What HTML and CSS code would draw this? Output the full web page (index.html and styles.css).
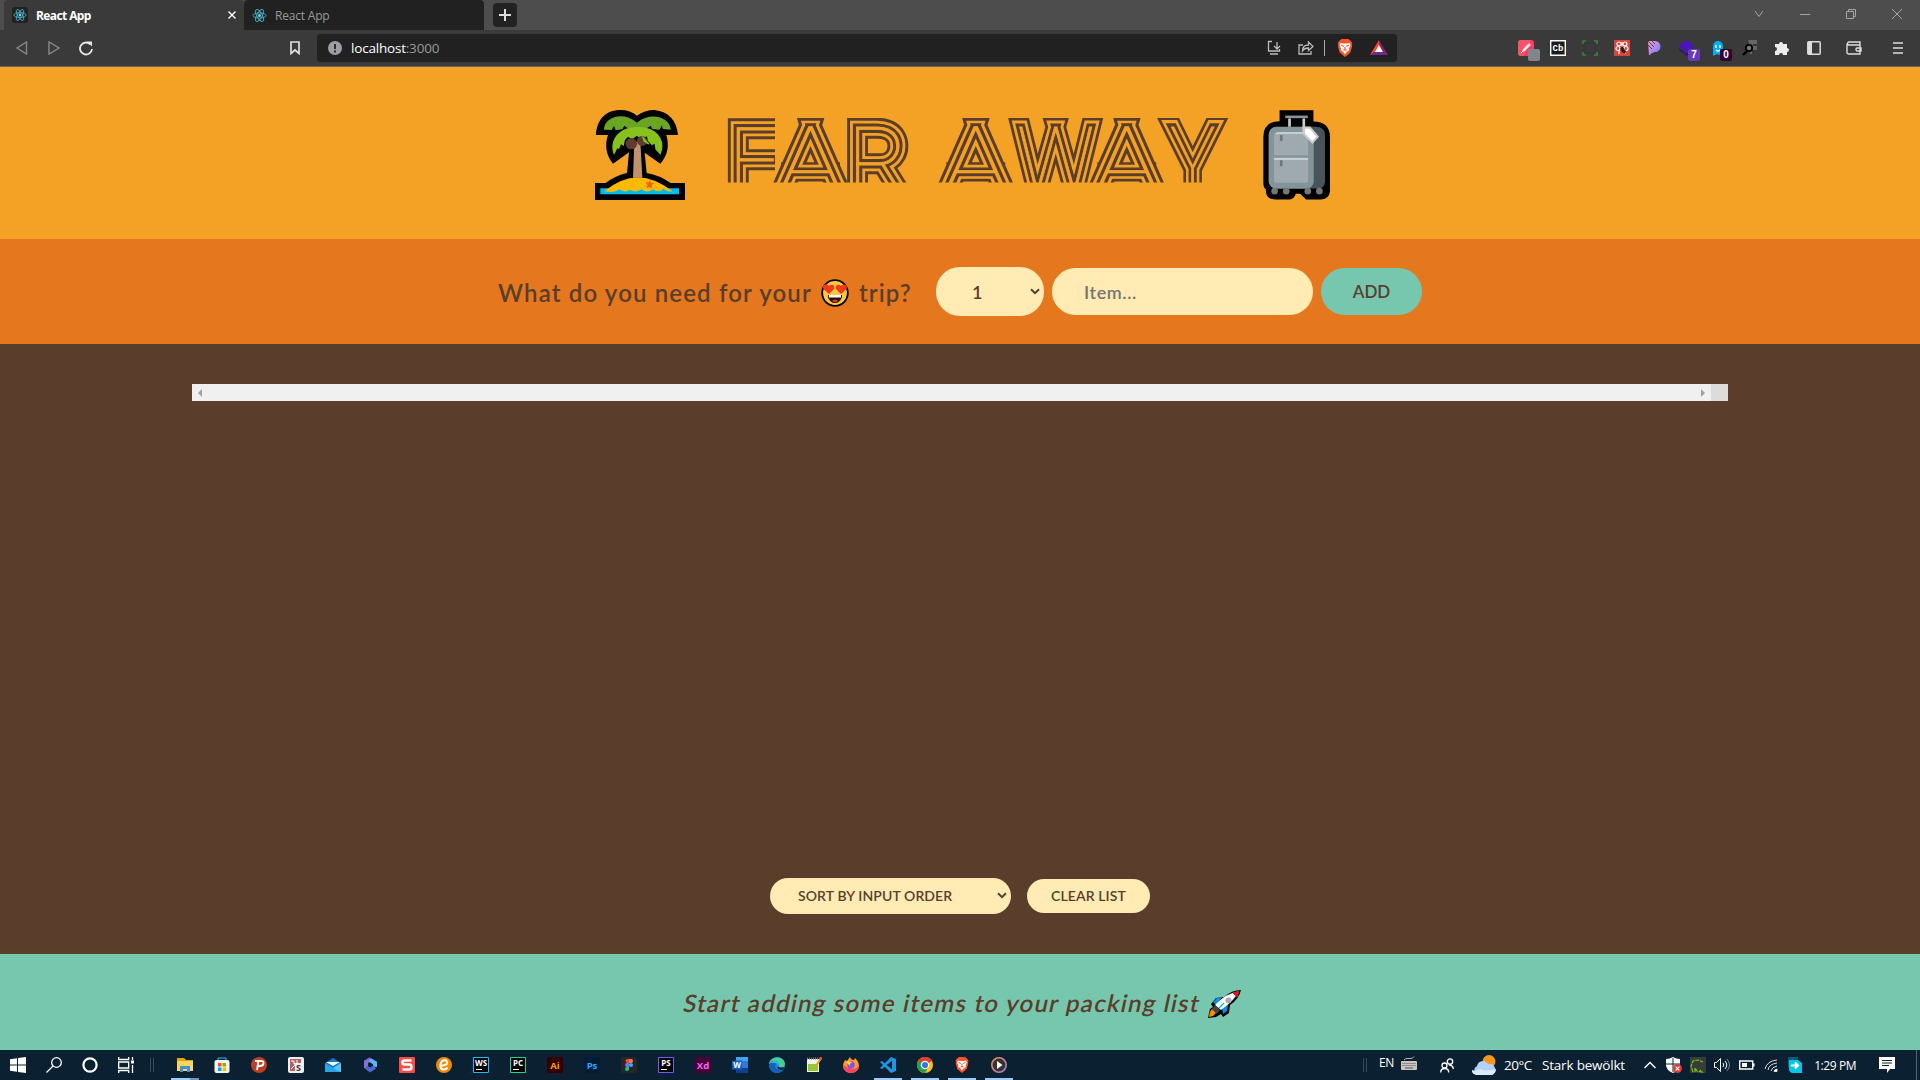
FILE: index.html
```html
<!DOCTYPE html>
<html lang="en">
<head>
<meta charset="utf-8">
<title>React App</title>
<link rel="stylesheet" href="styles.css">
</head>
<body>
<svg class="defs" width="0" height="0">
  <symbol id="react" viewBox="0 0 16 16"><g fill="none" stroke="#4aa9c0" stroke-width="1"><ellipse cx="8" cy="8" rx="7" ry="2.8"/><ellipse cx="8" cy="8" rx="7" ry="2.8" transform="rotate(60 8 8)"/><ellipse cx="8" cy="8" rx="7" ry="2.8" transform="rotate(120 8 8)"/></g><circle cx="8" cy="8" r="1.6" fill="#61dafb"/></symbol>
  <symbol id="brave" viewBox="0 0 16 16"><path d="M5 0h6l2 1.500 1.500 2-.5 2 .3 1-1.500 5.500L8 16l-4.800-4L1.700 6.500l.3-1-.5-2 1.500-2z" fill="#fb542b"/><path d="M4 3.500l2.500.5h3l2.500-.5 1 2.200-1.500 2.600.4 1.700-2 1L8 13.500 6.100 11l-2-1 .4-1.700L3 5.700z" fill="#fff"/><path d="M4.500 5.500l2.500 1M11.500 5.500L9 6.500M8 7v2.500M6.500 10L8 9.500l1.500.5" stroke="#fb542b" fill="none"/></symbol>
  <symbol id="chev" viewBox="0 0 10 7"><path d="M1 1.200l4 4 4-4" fill="none" stroke="#5a3e2b" stroke-width="2"/></symbol>
</svg>

<div class="tabs">
  <div class="tab active"><span class="fav"><svg width="14" height="14"><use href="#react"/></svg></span><b class="tab-title">React App</b><svg class="close" width="8" height="8" viewBox="0 0 8 8"><path d="M.5.500l7 7M7.500.500l-7 7" stroke="#fff" stroke-width="1.400"/></svg></div>
  <div class="tab"><svg width="15" height="15"><use href="#react"/></svg><span class="tab-title">React App</span></div>
  <div class="newtab"><svg width="12" height="12" viewBox="0 0 12 12"><path d="M6 0v12M0 6h12" stroke="#ddd" stroke-width="2"/></svg></div>
  <div class="window-buttons">
    <i><svg width="10" height="10" viewBox="0 0 10 10"><path d="M1 2l4 5.500L9 2"/></svg></i>
    <i><svg width="10" height="10" viewBox="0 0 10 10"><path d="M0 5.500h10"/></svg></i>
    <i><svg width="10" height="10" viewBox="0 0 10 10"><path d="M.5 2.500h7v7h-7zM2.500 2V.5h7v7H8"/></svg></i>
    <i><svg width="10" height="10" viewBox="0 0 10 10"><path d="M0 0l10 10M10 0L0 10"/></svg></i>
  </div>
</div>

<div class="toolbar">
  <div class="nav">
    <svg width="32" height="16" viewBox="0 0 32 16"><path d="M20.500 2v12L11 8z" fill="none" stroke="#888" stroke-width="1.400"/></svg>
    <svg width="32" height="16" viewBox="0 0 32 16"><path d="M11 2v12l10-6z" fill="none" stroke="#888" stroke-width="1.400"/></svg>
    <svg width="32" height="16" viewBox="0 0 32 16"><path d="M20.500 4.500A6 6 0 1 0 22 9" fill="none" stroke="#e8e8e8" stroke-width="1.800"/><path d="M17 1.500h5v5z" fill="#e8e8e8"/></svg>
  </div>
  <svg class="bookmark" width="10" height="14" viewBox="0 0 10 14"><path d="M1 1h8v11.500L5 9l-4 3.500z" fill="none" stroke="#ddd" stroke-width="1.700"/></svg>
  <div class="address">
    <svg width="14" height="14" viewBox="0 0 14 14"><circle cx="7" cy="7" r="7" fill="#9aa0a6"/><path d="M7 3v5M7 9.500v2" stroke="#222" stroke-width="1.800"/></svg>
    <span class="url">localhost<span>:3000</span></span>
    <div class="address-icons">
      <svg width="16" height="16" viewBox="0 0 16 16" class="line"><path d="M6 1.500H2.500v9.500h11V9M4 14h8M11 2v7M8 6l3 3 3-3"/></svg>
      <svg width="16" height="16" viewBox="0 0 16 16" class="line"><path d="M5 5H1v9h12v-3M4.500 11c0-4 2-6 6-6V2l4.500 4.500-4.500 4V8C8 8 6 8.500 4.500 11z"/></svg>
      <span class="rule"></span>
      <svg class="lion" width="18" height="18"><use href="#brave"/></svg>
      <svg width="18" height="16" viewBox="0 0 18 16"><path d="M9 0L0 15l9-4z" fill="#ff4724"/><path d="M9 0l9 15-9-4z" fill="#8a1f6e"/><path d="M0 15h18l-4-3H4z" fill="#662d91"/><path d="M9 5l4 7H5z" fill="#fff"/></svg>
    </div>
  </div>
  <div class="extensions">
    <i><svg width="16" height="16" viewBox="0 0 16 16"><rect width="16" height="16" rx="3" fill="#f63d68"/><path d="M0 3q0-3 3-3h10L5 16H3q-3 0-3-3z" fill="#f8526a"/><path d="M4 12l1-3 6-6 2 2-6 6z" fill="#ffd5cb"/><path d="M3 13l9-9" stroke="#fff" stroke-width="1"/></svg><em class="badge grey"></em></i>
    <i><svg width="16" height="16" viewBox="0 0 16 16"><path d="M.7.700h14.600v14.600H.7z" fill="#1b1b1b" stroke="#fff" stroke-width="1.400"/><text x="8" y="11" class="t-cb">Cb</text></svg></i>
    <i><svg width="16" height="16" viewBox="0 0 16 16"><path d="M3 3h10v10H3z" fill="none" stroke="#333"/><path d="M1 4V1h3M12 1h3v3M15 12v3h-3M4 15H1v-3" fill="none" stroke="#39843a" stroke-width="1.600"/></svg></i>
    <i><svg width="16" height="16" viewBox="0 0 16 16"><rect width="16" height="16" fill="#d9443c"/><g fill="none" stroke="#fff" stroke-width="1.200"><circle cx="5" cy="4" r="2"/><circle cx="11" cy="4" r="2"/><circle cx="4" cy="8.500" r="2"/><circle cx="12" cy="8.500" r="2"/><path d="M5 10v4M11 10v4M8 2v5"/></g><path d="M8 6l4 5-1 3-3-2-2-3z" fill="#321"/></svg></i>
    <i><svg width="14" height="16" viewBox="0 0 14 16"><defs><linearGradient id="pg" x2="1" y2="1"><stop stop-color="#ff9bd5"/><stop offset="1" stop-color="#5e7cff"/></linearGradient></defs><path d="M1 1h7a5.500 5.500 0 0 1 0 11q-3 0-6 3.500z" fill="url(#pg)"/><path d="M1 1l6 6M4 0l4 4M1 5l4 4" stroke="#3a3a3a" stroke-width=".9"/></svg></i>
    <i><svg width="17" height="17" viewBox="0 0 17 17"><path d="M8 0l8 6-7 6-8-6z" fill="#5010c4"/><path d="M1 9l8 6 7-6" fill="none" stroke="#37108a" stroke-width="2"/></svg><em class="badge purple">7</em></i>
    <i><svg width="14" height="16" viewBox="0 0 14 16"><path d="M2 16V6a5 5 0 0 1 10 0v8l-2-1-2 2-2-1z" fill="#00aef0"/><path d="M5 5v3M9 5v3M5 10q2 2 4 0" stroke="#fff" fill="none" stroke-width="1.300"/></svg><em class="badge plum">0</em></i>
    <i><svg width="16" height="16" viewBox="0 0 16 16"><path d="M6 0h9v4h-4v2h4v4h-5v4H8V6z" fill="#666"/><circle cx="7" cy="8" r="3.200" fill="#777" stroke="#000" stroke-width="1.800"/><path d="M5 11l-4 4" stroke="#000" stroke-width="2.200"/></svg></i>
    <i><svg width="16" height="16" viewBox="0 0 16 16"><path d="M1 4h4a2 2 0 1 1 4 0h4v4a2 2 0 1 1 0 4v3H9a2 2 0 1 0-4 0H1v-4a2 2 0 1 0 0-4z" fill="#eee"/></svg></i>
    <i><svg width="14" height="14" viewBox="0 0 14 14"><rect x=".8" y=".8" width="12.400" height="12.400" rx="1" fill="none" stroke="#ddd" stroke-width="1.500"/><path d="M1 1h4v12H1z" fill="#ddd"/></svg></i>
    <i class="wide"><svg width="16" height="14" viewBox="0 0 16 14"><path d="M14 3.500V1H2.500a1.700 1.700 0 0 0 0 3H14v9H3c-1.500 0-2-.5-2-2V2.500M15 7h-4a1.600 1.600 0 0 0 0 3h4z" fill="none" stroke="#ddd" stroke-width="1.400"/></svg></i>
    <i class="menu"><svg width="10" height="14" viewBox="0 0 10 14"><path d="M0 2h10M0 7h10M0 12h10" stroke="#ddd" stroke-width="1.500"/></svg></i>
  </div>
</div>

<main class="app">
  <header class="logo">
    <svg width="90" height="90" viewBox="45 60 270 270">
      <path d="M45 279h32q29-22 64-30l6-62-48 34c-22-26-25-58-15-86H48c2-44 26-75 75-75q28 0 48 17 22-17 52-17c44 4 67 33 71 75h-35c9 31 5 61-18 86l-47-33 6 61q40 7 72 30H315v51H45z"/>
      <path d="M72 119c0-38 57-57 99-21 43-36 101-14 101 21l-23-2-4-11-6 13-22-2-5-10-12 8H143l-10-8-6 11-20 3-5-13-7 12z" fill="#6aa524"/>
      <path d="M102 195c-17-44 14-84 69-84 59-4 91 42 70 83l-15-16-2-17-8 5-13-14-2-13-14 7-17-8-14 10-12-8-9 10-4 18-8-5-6 15-5-3z" fill="#86c11d"/>
      <path d="M163 155h18l6 108h-28z" fill="#bf946c"/><circle cx="154" cy="161" r="17" fill="#5f3b32"/><circle cx="186" cy="153" r="15" fill="#5f3b32"/><path d="M184 135l26 28-7 0-12-9z" fill="#86c11d"/>
      <path d="M61 295h236v18H61z" fill="#00bcf2"/><path d="M73 304q99-83 205 0-17 3-27-8-16 15-32 2-17 13-34 0-18 12-34 1-16 11-33-1-15 12-45 6z" fill="#ffb900"/><path d="M210 269l3 9 10 1-8 7 3 9-9-4-9 4 2-10-6-7 10-1z" fill="#f7630c"/>
    </svg>
    <h1 class="title"><svg width="495" height="116" viewBox="0 -15 495 116">
      <clipPath id="arms"><path d="M0 -15h48v116H0z"/></clipPath>
      <g class="line-a"><g id="name" class="mark"><text clip-path="url(#arms)" x="1" y="75">F</text><text transform="translate(50.700 75) scale(1.180 1)">A</text><text x="120.500" y="75">R </text><text transform="translate(216 75) scale(1.180 1)">A</text><text transform="translate(290 75) scale(.92 1)">W</text><text transform="translate(367 75) scale(1.180 1)">A</text><text transform="translate(443 75) scale(.82 1)">Y</text></g></g>
      <use href="#name" class="line-b"/><use href="#name" class="line-c"/><use href="#name" class="line-d"/>
      <path d="M-8 -15h511V0H-8zM-8 64.500h511v37H-8z" fill="#f4a226"/>
    </svg></h1>
    <svg width="67" height="90" viewBox="1028 60 202 270">
      <path d="M1078 60h102v34q49 0 50 46v150q4 40-30 39h-42l-18-17h-13q-5 16-18 17h-44c-20 0-30-12-28-30-7-4-8-12-8-26V141q1-48 49-48z"/>
      <path d="M1159 110h31q25 2 25 26v140q-2 20-20 20h-36z" fill="#4a5359"/><rect x="1045" y="110" width="136" height="187" rx="23" fill="#83949a"/><rect x="1061" y="128" width="103" height="151" rx="10" fill="#9faab0"/>
      <path d="M1095 80h68" stroke="#83949a" stroke-width="8"/><path d="M1108 85v25M1151 85v32" stroke="#c9cdd0" stroke-width="8"/><path d="M1067 132q3-3 10-3h87M1061 207h103" stroke="#c5ced1" stroke-width="6"/><path d="M1061 199h103" stroke="#83949a" stroke-width="7"/><path d="M1083 135v18M1083 211v18" stroke="#69797e" stroke-width="8"/>
      <path d="M1147 109h24l26 31-20 22-30-30z" fill="#ccc"/><path d="M1155 116h14l20 24-13 13-21-23z" fill="#fff"/>
      <g fill="#767676"><circle cx="1063" cy="304" r="10"/><circle cx="1098" cy="304" r="10"/><circle cx="1163" cy="304" r="10"/><circle cx="1198" cy="304" r="10"/></g>
    </svg>
  </header>

  <form class="add-form">
    <h3 class="question"><span class="q1">What do you need for your</span>
      <svg width="28" height="28" viewBox="0 0 28 28"><circle cx="14" cy="14" r="12.800" fill="#ffc83d" stroke="#000" stroke-width="1.800"/><path d="M8 15L2.500 10C.5 6 5.500 4 8 7c2.500-3 6.500-.5 5 3zM20 15l-5-5c-1.500-3.500 2.500-6 5-3 2.500-3 7.500-1 5.500 3z" fill="#f03a17"/><path d="M7 16h14v2q-2 6-7 6t-7-6z" fill="#2b1010"/><path d="M8 16h12v2.500H8z" fill="#fff"/><path d="M11 22q3-3 6 0-3 2-6 0" fill="#f03a17"/></svg>
      <span class="q2">trip?</span></h3>
    <div class="pill qty"><span>1</span><svg width="10" height="7"><use href="#chev"/></svg></div>
    <input class="pill item" type="text" placeholder="Item...">
    <button class="pill add" type="button">ADD</button>
  </form>

  <section class="list">
    <div class="scroller"><svg width="4" height="8" viewBox="0 0 4 8"><path d="M4 0v8L0 4z"/></svg><svg class="right" width="4" height="8" viewBox="0 0 4 8"><path d="M0 0v8l4-4z"/></svg><span class="corner"></span></div>
    <div class="actions">
      <div class="pill sort"><span>SORT BY INPUT ORDER</span><svg width="10" height="7"><use href="#chev"/></svg></div>
      <button class="pill clear" type="button">CLEAR LIST</button>
    </div>
  </section>

  <footer class="stats"><span class="hint">Start adding some items to your packing list</span>
    <svg width="35" height="28" viewBox="0 0 35 28"><path d="M34 0q-2 9-11 15l-1 8-6 4-2-3-5 3-8 1 2-9 3-2-2-3 5-6 8-1Q25 0 34 0z"/><path d="M6 12l4-4 5-1-6 8zM16 24l-1-6 6-4-1 7z" fill="#0093e8"/><path d="M31.500 1.500Q29 9 14 20l-6-5Q19 3 31.500 1.500z" fill="#fff"/><path d="M26 3l6-2-2 6z" fill="#e81123" stroke="#e81123"/><circle cx="21.500" cy="10.500" r="3" fill="#aab"/><path d="M12 18l5-5" stroke="#00bcf2" stroke-width="1.200"/><path d="M8 15l5 5-3 4-5-5z" fill="#444"/><path d="M5 19l4 4-3 3-4 1 1-5z" fill="#ff8c00"/></svg>
  </footer>
</main>

<div class="taskbar">
  <div class="system">
    <i><svg width="16" height="16" viewBox="0 0 16 16" fill="#fff"><path d="M0 2.200l7-1v6.300H0zM8 1l8-1v7.500H8zM0 8.500h7v6.300l-7-1zM8 8.500h8V16l-8-1z"/></svg></i>
    <i><svg width="16" height="16" viewBox="0 0 16 16" class="white"><circle cx="10.500" cy="5.500" r="4.800"/><path d="M7 9L.5 15.500"/></svg></i>
    <i><svg width="16" height="16" viewBox="0 0 16 16" class="white ring"><circle cx="8" cy="8" r="6.600"/></svg></i>
    <i><svg width="16" height="16" viewBox="0 0 16 16" class="white"><path d="M.7 0v2.500h10V0M.7 5h10v6h-10zM.7 16v-2.500h10V16M14.500 0v3M14.500 8v8"/><path d="M13 5h3" stroke-width="3"/></svg></i>
    <span class="grip"></span>
  </div>
  <div class="apps">
    <i class="open stacked"><svg width="16" height="16" viewBox="0 0 16 16"><path d="M0 1h7l2 2h7v11H0z" fill="#e8a500"/><path d="M0 4h16v10H0z" fill="#ffd35c"/><path d="M3 15V9h10v6h-3v-3H6v3z" fill="#3f8fe0"/></svg></i>
    <i><svg width="16" height="16" viewBox="0 0 16 16"><path d="M4 4V1h8v3" fill="none" stroke="#3bb7ee"/><rect x=".5" y="3" width="15" height="13" rx="2" fill="#f3f3f3"/><path d="M4 6h3.500v3.500H4z" fill="#f25022"/><path d="M8.500 6H12v3.500H8.500z" fill="#7fba00"/><path d="M4 10.500h3.500V14H4z" fill="#00a4ef"/><path d="M8.500 10.500H12V14H8.500z" fill="#ffb900"/></svg></i>
    <i><svg width="16" height="16" viewBox="0 0 16 16"><circle cx="8" cy="8" r="8" fill="#bd3f23"/><path d="M4 4h6q3 0 2.500 2.500T9 9H7.500M7.500 4L6 13" fill="none" stroke="#fff" stroke-width="1.800"/></svg></i>
    <i><svg width="16" height="16" viewBox="0 0 16 16"><rect width="16" height="16" rx="2" fill="#eee"/><path d="M2 2h11v4H7v8H2z" fill="#b46267"/><path d="M3 4h3v3h3V3M3 12l4-4" fill="none" stroke="#fff"/><text x="10.500" y="14" class="t-s">S</text></svg></i>
    <i><svg width="16" height="16" viewBox="0 0 16 16"><path d="M0 6l8-5 8 5v9H0z" fill="#1277c9"/><path d="M1 5h14L8 9z" fill="#f5f5f5"/><path d="M0 6l8 5 8-5v9H0z" fill="#2aa6e8"/><path d="M8 11l8-5v9z" fill="#58c5f5"/></svg></i>
    <i><svg width="16" height="16" viewBox="0 0 16 16" fill="none" stroke-width="4"><path d="M9 2L4 5v6" stroke="#8c6de0"/><path d="M8 3l5 3v4" stroke="#59b8f4"/><path d="M4 10l4 3 5-3" stroke="#4b67d1"/></svg></i>
    <i><svg width="16" height="16" viewBox="0 0 16 16"><rect width="16" height="16" rx="1" fill="#fb4b46"/><path d="M12.500 3.500h-7q-2 0-2 2t2 2h5q2 0 2 2.500t-2 2.500h-7" fill="none" stroke="#fff" stroke-width="2.600"/></svg></i>
    <i><svg width="16" height="16" viewBox="0 0 16 16"><circle cx="8" cy="8" r="8" fill="#f08a0c"/><path d="M4 9c5 0 8-2 7-4.500S5 3 4.500 8s4 6 7 2.500" fill="none" stroke="#fff" stroke-width="2"/></svg></i>
    <i><svg width="16" height="16" viewBox="0 0 16 16"><path d="M.5.500h15v15H.5z" fill="#000" stroke="#1bbcf5"/><text x="8" y="8.500" class="t-jb">WS</text><path d="M3 12.500h6" stroke="#fff"/></svg></i>
    <i><svg width="16" height="16" viewBox="0 0 16 16"><path d="M.5.500h15v15H.5z" fill="#000" stroke="#21d789"/><text x="8" y="8.500" class="t-jb">PC</text><path d="M3 12.500h6" stroke="#fff"/></svg></i>
    <i><svg width="16" height="16" viewBox="0 0 16 16"><rect width="16" height="16" rx="2" fill="#330000"/><text x="8" y="11.500" class="t-ad" fill="#ff9a00">Ai</text></svg></i>
    <i><svg width="16" height="16" viewBox="0 0 16 16"><rect width="16" height="16" rx="2" fill="#001e36"/><text x="8" y="11.500" class="t-ad" fill="#31a8ff">Ps</text></svg></i>
    <i><svg width="16" height="16" viewBox="0 0 16 16"><rect width="16" height="16" rx="2" fill="#262626"/><path d="M6.500 2H8v4H6.500a2 2 0 0 1 0-4z" fill="#f24e1e"/><path d="M8 2h2a2 2 0 0 1 0 4H8z" fill="#ff7262"/><path d="M8 6H6a2 2 0 0 0 0 4h2z" fill="#a259ff"/><circle cx="10" cy="8" r="2" fill="#1abcfe"/><path d="M8 10H6a2 2 0 1 0 2 2z" fill="#0acf83"/></svg></i>
    <i><svg width="16" height="16" viewBox="0 0 16 16"><path d="M.5.500h15v15H.5z" fill="#000" stroke="#765af8"/><text x="8" y="8.500" class="t-jb">PS</text><path d="M3 12.500h6" stroke="#fff"/></svg></i>
    <i><svg width="16" height="16" viewBox="0 0 16 16"><rect width="16" height="16" rx="2" fill="#470137"/><text x="8" y="11.500" class="t-ad" fill="#ff61f6">Xd</text></svg></i>
    <i><svg width="16" height="16" viewBox="0 0 16 16"><path d="M4 0h12v16H4z" fill="#2b7cd3"/><path d="M4 0h12v4H4z" fill="#41a5ee"/><path d="M4 11h12v5H4z" fill="#103f91"/><path d="M0 3.500h10v9H0z" fill="#185abd"/><text x="5" y="10.800" class="t-w">W</text></svg></i>
    <i><svg width="16" height="16" viewBox="0 0 16 16"><circle cx="8" cy="8" r="8" fill="#1684d8"/><path d="M0 7C1-1 15-2 16 7q0 4-5 3.500-2-.5-1-3C8 3 3 3 0 7z" fill="#45cf96"/><path d="M0 7q5-6 10-.500Q7 5 6 9q0 4 8 4-5 5-10 1.500Q0 12 0 7z" fill="#1560b8"/><path d="M0 7q5-6 10-.500L9 8Q5 4 0 7z" fill="#31b6e6"/><path d="M16 8q0 3-5 2.500L9 9.500q-2 3 5 3.500z" fill="#0b2030"/></svg></i>
    <i><svg width="16" height="16" viewBox="0 0 16 16"><path d="M1 2h12v13H1z" fill="#f3f3e6"/><path d="M2 7h10v7H2z" fill="#8ccb36"/><path d="M1 1.500h12" stroke="#777" stroke-width="2" stroke-dasharray="1 1"/><path d="M15 1L8 12" stroke="#e0a52e" stroke-width="2.200"/><path d="M15.500 0l-1.500 2.500" stroke="#e24848" stroke-width="2.500"/></svg></i>
    <i><svg width="16" height="16" viewBox="0 0 16 16"><path d="M2 3l2 1 3-4q1 3 4 3l1-2q4 4 4 8a8 7 0 0 1-16 0q0-3 2-6z" fill="#ff9825"/><path d="M0 8q1 8 8 8t8-8q-2 4-6 4T0 8z" fill="#ff4164"/><circle cx="8" cy="8" r="3.700" fill="#8750e8"/><path d="M3 5q4-2 6 1-3 0-2 3z" fill="#ffd63f"/></svg></i>
    <i class="open"><svg width="16" height="16" viewBox="0 0 16 16"><path d="M0 5l2-1 10 8V4L2 12l-2-1 11-11 5 2v12l-5 2z" fill="#2196e0"/><path d="M12 4l-5 4 5 4z" fill="#0b2030"/></svg></i>
    <i class="open"><svg width="16" height="16" viewBox="0 0 16 16"><circle cx="8" cy="8" r="8" fill="#fbc116"/><path d="M8 8L1 4a8 8 0 0 1 14 0z" fill="#e33b2e"/><path d="M1 4a8 8 0 0 0 7 12l4-7z" fill="#24a148"/><circle cx="8" cy="8" r="3.700" fill="#3478e5" stroke="#fff" stroke-width="1.200"/></svg></i>
    <i class="open"><svg width="16" height="16"><use href="#brave"/></svg></i>
    <i class="open"><svg width="16" height="16" viewBox="0 0 16 16"><defs><linearGradient id="mg" x2="1" y2="1"><stop stop-color="#f28b50"/><stop offset="1" stop-color="#9b7edc"/></linearGradient></defs><circle cx="8" cy="8" r="7.200" fill="#333" stroke="url(#mg)" stroke-width="1.600"/><path d="M6 4l5.500 4L6 12z" fill="#fff"/></svg></i>
  </div>
  <div class="tray">
    <span class="grip"></span><span class="lang">EN</span>
    <svg class="kbd" width="16" height="15" viewBox="0 0 16 15"><rect y="5" width="16" height="9" rx="1" fill="#c9c5be"/><path d="M1.500 7.500h13M1.500 9.500h13" stroke="#555" stroke-dasharray="1 1"/><path d="M4 12h8" stroke="#555"/><path d="M3 4q1-2 5-1.500t5-2" fill="none" stroke="#bbb"/></svg>
    <svg class="people white" width="14" height="15" viewBox="0 0 14 15"><circle cx="10" cy="3.500" r="2.700"/><circle cx="4.500" cy="7.500" r="2.500"/><path d="M.7 14.500q0-4 4-4t4 4M9 7q4 0 4.300 4"/></svg>
    <svg class="weather" width="24" height="20" viewBox="0 0 24 20"><circle cx="17" cy="6.500" r="6.500" fill="#f8951d"/><path d="M5 20a5 5 0 0 1 0-9 6 6 0 0 1 11-2 5.500 5.500 0 1 1 3 11z" fill="#b3d1fb"/><path d="M4 20q-5-2-4-5 4 2 8-1 6 3 16 0 0 4-4 6z" fill="#dceaff"/></svg>
    <span class="temp">20°C</span><span class="cond">Stark bewölkt</span>
    <svg class="white caret" width="12" height="8" viewBox="0 0 12 8"><path d="M.5 7L6 1.500 11.500 7" stroke-width="1.400"/></svg>
    <svg class="ti" width="16" height="16" viewBox="0 0 16 16"><path d="M0 2q4 0 7-2 3 2 7 2v6q0 5-7 8-7-3-7-8z" fill="#fff"/><path d="M7 1v14M0 7h14" stroke="#0b2030"/><circle cx="11.500" cy="11.500" r="4.500" fill="#e03a36"/><path d="M9.700 9.700l3.600 3.600M13.300 9.700l-3.600 3.600" stroke="#fff" stroke-width="1.200"/></svg>
    <svg class="ti" width="16" height="16" viewBox="0 0 16 16"><path d="M0 0h16v16H0z" fill="#383d3c"/><path d="M3 15L1 9l2-5 5-1 5 2M5 15v-4l2 3 5 1-2-2" fill="none" stroke="#76c905" stroke-width="1.200" stroke-dasharray="4 .7"/></svg>
    <svg class="ti" width="16" height="16" viewBox="0 0 16 16"><path d="M.5 5.500h2l4-4v13l-4-4h-2zM9 6q1.500 2 0 4M11 4q3.500 4 0 8" fill="none" stroke="#fff"/><path d="M13 2q5 6 0 12" fill="none" stroke="#788"/></svg>
    <svg class="ti" width="16" height="16" viewBox="0 0 16 16"><path d="M.7 4h13v8H.7z" fill="none" stroke="#fff" stroke-width="1.400"/><path d="M3 6h5v4H3zM14 6.500h1.500v3H14z" fill="#fff"/></svg>
    <svg class="ti" width="16" height="16" viewBox="0 0 16 16" fill="none" stroke="#ddd"><path d="M2 12Q4 4 14 3M5 13q1-6 9-7M8 14q1-4 6-5"/><path d="M11 14.500q0-2 3-2.500v2.500z" fill="#fff"/></svg>
    <svg class="ti" width="16" height="16" viewBox="0 0 16 16"><path d="M1 0h10v10H1z" fill="#075b7a"/><path d="M2 3h9l4 3v10H5q-3-1-3-4z" fill="#00c6e8"/><path d="M4 8.500h6M8 5.500l3 3-3 3" stroke="#fff" stroke-width="2" fill="none"/></svg>
    <span class="clock">1:29 PM</span>
    <svg class="note" width="16" height="16" viewBox="0 0 16 16"><path d="M0 0h16v12h-5l-3 4v-4H0z" fill="#fff"/><path d="M3 3.500h10M3 6h10M3 8.500h7" stroke="#0b2030"/></svg>
    <span class="edge"></span>
  </div>
</div>
</body>
</html>
```
FILE: styles.css
```css
* { box-sizing: border-box; }
body { margin: 0; width: 1920px; height: 1080px; overflow: hidden; display: flex; flex-direction: column; font-family: "Open Sans", "Noto Sans", sans-serif; background: #0b2030; }
svg { display: block; flex: none; }
.defs { position: absolute; }
i, em.badge { font-style: normal; }

.tabs { height: 30px; background: #4d4d4d; display: flex; padding-left: 4px; flex: none; }
.tab { width: 240px; height: 30px; background: #212121; color: #999; display: flex; align-items: center; padding: 0 8px; font-size: 12px; border-radius: 4px 4px 0 0; }
.tab.active { background: #3a3a3a; color: #fff; }
.fav { width: 16px; height: 16px; background: #222; border-radius: 2px; padding: 1px; }
.tab-title { margin-left: 8px; letter-spacing: -.2px; width: 80px; white-space: nowrap; }
.active .tab-title { letter-spacing: -.6px; }
.close { margin-left: auto; }
.newtab { width: 24px; height: 24px; margin: 3px 0 0 9px; background: #222; border-radius: 4px; display: grid; place-items: center; }
.window-buttons { margin-left: auto; display: flex; align-items: center; height: 28px; }
.window-buttons i { width: 46px; display: grid; place-items: center; }
.window-buttons path { fill: none; stroke: #a5a5a5; }

.toolbar { height: 37px; background: #3a3a3a; border-bottom: 1px solid #65666a; display: flex; align-items: center; padding-left: 6px; flex: none; }
.nav { display: flex; width: 284px; }
.bookmark { margin-right: 17px; }
.address { width: 1080px; height: 28px; background: #212121; border-radius: 4px; display: flex; align-items: center; padding: 0 9px 0 11px; }
.url { margin-left: 9px; color: #fff; font-size: 13.500px; letter-spacing: -.2px; }
.url span { color: #999; }
.address-icons { margin-left: auto; display: flex; align-items: center; }
.line { margin-right: 16px; fill: none; stroke: #bbb; stroke-width: 1.300; }
.line + .line { margin-right: 10px; }
.rule { width: 1px; height: 16px; background: #aaa; margin-right: 11px; }
.lion { margin-right: 16px; }
.extensions { display: flex; margin-left: 113px; }
.extensions i { width: 32px; height: 28px; display: grid; place-items: center; position: relative; }
.extensions .wide { width: 48px; }
.extensions .menu { width: 40px; }
.badge { position: absolute; left: 18px; top: 15px; width: 12px; height: 12px; border-radius: 2px; color: #fff; font: bold 10px/12px "Liberation Sans", sans-serif; text-align: center; }
.grey { background: #80868b; }
.purple { background: #673ab7; }
.plum { background: #330033; }
.t-cb { font: bold 9px "Liberation Mono", monospace; fill: #fff; text-anchor: middle; }

.app { height: 983px; display: flex; flex-direction: column; flex: none; font-family: Lato, sans-serif; color: #5a3e2b; font-weight: 600; }
.logo { height: 172px; background: #f4a226; display: flex; align-items: center; justify-content: center; gap: 41.500px; padding: 4px 0 0 5px; }
.title { margin: 12px 0 0; }
/* nested outlines, widest first, leave four parallel lines per stroke */
.title svg { overflow: visible; }
.mark { font-family: Roboto, sans-serif; font-size: 93px; font-weight: 100; stroke-linejoin: miter; stroke-miterlimit: 6; }
.mark text { vector-effect: non-scaling-stroke; white-space: pre; }
.line-a { stroke: #5a3e2b; stroke-width: 18.400px; fill: #5a3e2b; }
.line-b { stroke: #f4a226; stroke-width: 12.600px; fill: #f4a226; }
.line-c { stroke: #5a3e2b; stroke-width: 6.900px; fill: #5a3e2b; }
.line-d { stroke: #f4a226; stroke-width: .8px; fill: #f4a226; }

.add-form { height: 105px; background: #e5771f; display: flex; align-items: center; padding: 0 0 0 498px; }
.question { margin: 3px 0 0; display: flex; align-items: center; font-size: 24px; font-weight: 600; line-height: 30px; white-space: nowrap; width: 438px; }
.q1 { width: 323px; letter-spacing: 1.150px; }
.q2 { margin-left: 10px; letter-spacing: 1.100px; }
.pill { background: #ffebb3; border: 0; color: #5a3e2b; font: 600 18px Lato, sans-serif; border-radius: 24px; display: flex; align-items: center; flex: none; }
.qty { width: 108px; height: 49px; padding: 0 4px 0 36px; justify-content: space-between; margin-right: 8px; }
.item { width: 261px; height: 47px; padding: 0 32px; margin-right: 8px; letter-spacing: .6px; }
.item::placeholder { color: #757575; opacity: 1; }
.add { width: 101px; height: 47px; background: #76c7ad; justify-content: center; font-size: 17px; }

.list { height: 610px; background: #5a3e2b; padding: 40px 192px; display: flex; flex-direction: column; }
.scroller { height: 17px; background: #f0f0f0; display: flex; align-items: center; padding-left: 6px; }
.scroller path { fill: #a0a0a0; }
.scroller .right { margin-left: auto; margin-right: 6px; }
.corner { width: 17px; height: 17px; background: #dcdcdc; }
.actions { margin-top: auto; display: flex; align-items: center; justify-content: center; gap: 16px; }
.actions .pill { font-size: 14px; border-radius: 18px; padding-bottom: 2px; letter-spacing: .1px; }
.sort { width: 241px; height: 36px; padding: 0 4px 0 28px; justify-content: space-between; }
.clear { width: 123px; height: 34px; justify-content: center; }

.stats { height: 96px; background: #76c7ad; display: flex; align-items: center; padding: 3px 0 0 684px; font-size: 24px; }
.hint { width: 523px; margin-top: -2px; letter-spacing: 1.270px; white-space: nowrap; transform: skewX(-12deg); }

.taskbar { height: 30px; display: flex; background: #0b2030; color: #fff; flex: none; font-size: 13.500px; }
.taskbar i { display: grid; place-items: center; height: 30px; }
.system, .apps, .tray { display: flex; align-items: center; }
.system { width: 166px; }
.system i { width: 36px; }
.white { fill: none; stroke: #fff; stroke-width: 1.300; }
.ring { stroke-width: 2.200; }
.grip { width: 4px; height: 14px; border: solid #3a4b57; border-width: 0 1px; margin-left: 6px; }
.apps i { width: 37px; }
.apps .open { background: linear-gradient(#9ccbf8, #9ccbf8) 5px 28px / 28px 2px no-repeat; }
.apps .stacked { background: linear-gradient(90deg, #9ccbf8 19px, #7098bd 19px) 5px 28px / 28px 2px no-repeat; }
.t-jb, .t-ad, .t-w, .t-s { font: bold 8px "Open Sans", sans-serif; text-anchor: middle; }
.t-jb { fill: #fff; }
.t-ad { font-size: 9.500px; }
.t-w { fill: #fff; }
.t-s { font-size: 9px; fill: #333; }
.tray { flex: 1; padding-left: 340px; white-space: nowrap; }
.lang { width: 22px; margin: -5px 0 0 12px; font-size: 12px; letter-spacing: -.3px; }
.kbd { margin: -4px 23px 0 0; }
.people { margin-right: 18px; }
.weather { margin-right: 8px; }
.temp { width: 38px; letter-spacing: -.5px; }
.cond { width: 102px; letter-spacing: -.2px; }
.caret { margin-right: 10px; }
.ti { margin-right: 8.200px; }
.clock { width: 65px; margin-left: 3px; font-size: 12px; letter-spacing: -.4px; }
.edge { width: 1px; height: 30px; background: #51636f; margin-left: auto; margin-right: 3px; }
```
